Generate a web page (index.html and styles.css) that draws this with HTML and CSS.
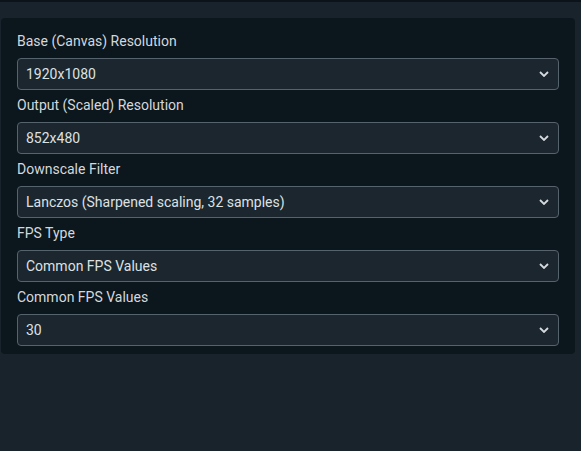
FILE: index.html
```html
<!DOCTYPE html>
<html>
<head>
<meta charset="utf-8">
<link rel="stylesheet" href="styles.css">
</head>
<body>
<div class="topbar"></div>
<div class="panel">
  <div class="field">
    <label class="label">Base (Canvas) Resolution</label>
    <div class="select"><span>1920x1080</span><svg class="chev" viewBox="0 0 10 6" width="10" height="6"><path d="M1 1 L5 5 L9 1" fill="none" stroke="#d6dade" stroke-width="1.8"/></svg></div>
  </div>
  <div class="field">
    <label class="label">Output (Scaled) Resolution</label>
    <div class="select"><span>852x480</span><svg class="chev" viewBox="0 0 10 6" width="10" height="6"><path d="M1 1 L5 5 L9 1" fill="none" stroke="#d6dade" stroke-width="1.8"/></svg></div>
  </div>
  <div class="field">
    <label class="label">Downscale Filter</label>
    <div class="select"><span>Lanczos (Sharpened scaling, 32 samples)</span><svg class="chev" viewBox="0 0 10 6" width="10" height="6"><path d="M1 1 L5 5 L9 1" fill="none" stroke="#d6dade" stroke-width="1.8"/></svg></div>
  </div>
  <div class="field">
    <label class="label">FPS Type</label>
    <div class="select"><span>Common FPS Values</span><svg class="chev" viewBox="0 0 10 6" width="10" height="6"><path d="M1 1 L5 5 L9 1" fill="none" stroke="#d6dade" stroke-width="1.8"/></svg></div>
  </div>
  <div class="field">
    <label class="label">Common FPS Values</label>
    <div class="select"><span>30</span><svg class="chev" viewBox="0 0 10 6" width="10" height="6"><path d="M1 1 L5 5 L9 1" fill="none" stroke="#d6dade" stroke-width="1.8"/></svg></div>
  </div>
</div>
</body>
</html>
```
FILE: styles.css
```css
html, body {
  margin: 0;
  padding: 0;
}
body {
  background: #19232b;
  width: 581px;
  height: 451px;
  overflow: hidden;
  font-family: Roboto, "Liberation Sans", sans-serif;
  font-size: 14px;
  color: #d4d8dc;
}
.topbar {
  height: 2px;
  background: #0c141a;
}
.panel {
  margin: 16px 6px 0 1px;
  padding: 8px 16px 8px;
  background: #0b161d;
  border-radius: 4px;
}
.label {
  display: block;
  line-height: 20px;
  padding-top: 5px;
  margin-bottom: 7px;
  color: #d4d8dc;
}
.select {
  height: 32px;
  box-sizing: border-box;
  border: 1px solid #56626c;
  border-radius: 4px;
  background: #1b262e;
  display: flex;
  align-items: center;
  justify-content: space-between;
  padding: 0 9px 0 8px;
  color: #dde1e4;
}
.chev {
  display: block;
}
```
